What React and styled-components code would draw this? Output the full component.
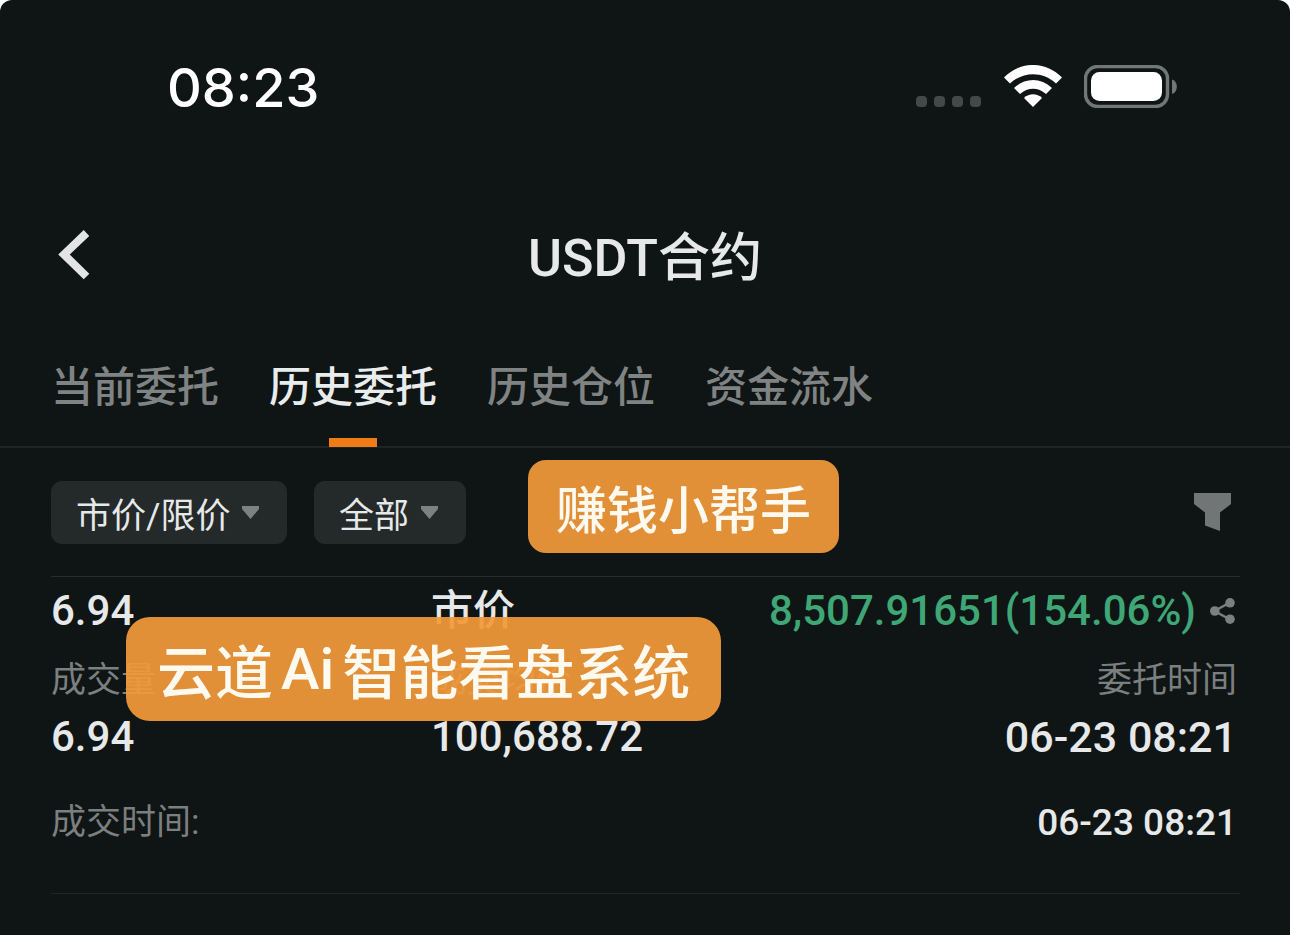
import React from "react";
import styled, { createGlobalStyle } from "styled-components";

const latin = `Roboto, "Noto Sans CJK SC", sans-serif`;

const GlobalStyle = createGlobalStyle`
  * { box-sizing: border-box; }
  body { margin: 0; background: #fff; }
  button, select { font: inherit; color: inherit; border: 0; background: none; padding: 0; margin: 0; }
  svg { display: block; flex: none; }
`;

const Screen = styled.main`
  min-height: 100vh;
  background: #0f1414;
  border-radius: 12px 12px 0 0;
  color: #e6e8e9;
  font-family: ${latin};
  overflow: hidden;
`;

const StatusBar = styled.header`
  display: flex;
  align-items: center;
  justify-content: space-between;
  height: 174px;
  padding: 0 113px 0 167px;
`;

const Clock = styled.time`
  padding-top: 2px;
  font: 500 54px/64px Inter, sans-serif;
  color: #fff;
`;

const StatusIcons = styled.div`
  display: flex;
  align-items: center;
  gap: 22px;
  padding-bottom: 2px;
`;

const TitleBar = styled.div`
  display: grid;
  grid-template-columns: 1fr auto 1fr;
  align-items: center;
  height: 162px;
  padding: 0 58px;
`;

const BackButton = styled.button`
  justify-self: start;
`;

const Title = styled.h1`
  margin: 0;
  padding-top: 8px;
  font-size: 52px;
  line-height: 64px;
  font-weight: 500;
`;

const Tabs = styled.nav`
  display: flex;
  gap: 50px;
  height: 112px;
  padding: 0 51px;
  border-bottom: 2px solid #1e2323;
`;

const Tab = styled.a`
  position: relative;
  padding-top: 22px;
  font-size: 42px;
  line-height: 60px;
  font-weight: 500;
  text-decoration: none;
  color: ${(p) => (p.$active ? "#e9ecec" : "#7f8383")};

  &::after {
    content: "";
    display: ${(p) => (p.$active ? "block" : "none")};
    position: absolute;
    left: 50%;
    bottom: -1px;
    width: 48px;
    height: 9px;
    margin-left: -24px;
    background: #f07c17;
  }
`;

const Filters = styled.section`
  position: relative;
  display: flex;
  align-items: center;
  gap: 27px;
  height: 129px;
  margin: 0 50px 0 51px;
  border-bottom: 1px solid #272c2c;
`;

const Chip = styled.label`
  display: flex;
  align-items: center;
  gap: 11px;
  height: 63px;
  padding: 0 28px 0 25px;
  border-radius: 11px;
  background: #242929;
`;

const ChipSelect = styled.select`
  appearance: none;
  height: 63px;
  padding-top: 8px;
  font-size: 35px;
  outline: none;
`;

const FilterButton = styled.button`
  margin-left: auto;
  padding-right: 9px;
`;

const Order = styled.article`
  position: relative;
  margin: 0 50px 0 51px;
  padding-bottom: 4px;
  border-bottom: 1px solid #202525;
`;

const Row = styled.div`
  display: grid;
  grid-template-columns: 380px 1fr auto;
  align-items: center;
  height: ${(p) => p.$height};
  padding-right: 3px;

  & > :last-child { justify-self: end; }
`;

const SplitRow = styled.div`
  display: flex;
  align-items: center;
  justify-content: space-between;
  height: 132px;
  padding-right: 3px;
`;

const valueSizes = { small: "37px", medium: "42px", large: "43px" };

const Value = styled.span`
  font-size: ${(p) => valueSizes[p.$size || "medium"]};
  line-height: 40px;
  font-weight: 500;
`;

const Label = styled.span`
  font-size: 35px;
  line-height: 52px;
  color: #7b7f7f;
`;

const Profit = styled.span`
  display: flex;
  align-items: center;
  gap: 14px;
  padding-right: 2px;
  font-size: 42px;
  line-height: 60px;
  font-weight: 500;
  color: #3fa676;
`;

const Badge = styled.div`
  position: absolute;
  z-index: 1;
  display: flex;
  align-items: center;
  white-space: nowrap;
  color: #fffaf0;
  background: rgba(242, 154, 59, 0.93);
  font-family: ${latin};
  font-weight: 500;
`;

const HelperBadge = styled(Badge)`
  left: 477px;
  top: 12px;
  height: 93px;
  padding: 0 28px;
  border-radius: 18px;
  font-size: 51px;
`;

const SystemBadge = styled(Badge)`
  left: 75px;
  top: 40px;
  gap: 8px;
  height: 104px;
  padding: 0 31px;
  border-radius: 24px;
  font-size: 58px;
`;

const Caret = () => (
  <svg width="17" height="13" viewBox="0 0 17 13" aria-hidden="true">
    <path d="M0 0h17v3L8.500 13 0 3z" fill="#7d8181" />
  </svg>
);

const Signal = () => (
  <svg width="66" height="42" viewBox="0 0 66 42" fill="#444848" aria-hidden="true">
    {[0, 18, 36, 54].map((x) => (
      <rect key={x} x={x} y="31" width="11" height="11" rx="4" />
    ))}
  </svg>
);

const Wifi = () => (
  <svg width="58" height="42" viewBox="0 0 58 42" fill="#fff" aria-hidden="true">
    <path d="M0 12.500C16-4.200 42-4.200 58 12.500L52 18.500C39 6.200 19 6.200 6 18.500z" />
    <path d="M10 23C21 12.300 37 12.300 48 23L42 29C34 22 24 22 16 29z" />
    <path d="M20 33C25 28 33 28 38 33L29 42z" />
  </svg>
);

const Battery = () => (
  <svg width="93" height="43" viewBox="0 0 93 43" aria-hidden="true">
    <rect x="1.500" y="1.500" width="82" height="40" rx="12" fill="none" stroke="#727676" strokeWidth="3.400" />
    <rect x="7" y="7" width="71" height="29" rx="8.500" fill="#fff" />
    <path d="M88 14.500c6.500 2 6.500 12.500 0 14.500z" fill="#727676" />
  </svg>
);

const Back = () => (
  <svg width="32" height="50" viewBox="0 0 32 50" aria-hidden="true">
    <path d="M28.500 3 6 24.500l22.500 22" fill="none" stroke="#e3e4e5" strokeWidth="8" />
  </svg>
);

const Funnel = () => (
  <svg width="37" height="38" viewBox="0 0 37 38" aria-hidden="true">
    <path d="M0 0h37v11l-11 8.500V38L11 32.500v-13L0 11z" fill="#717575" />
  </svg>
);

const Share = () => (
  <svg width="25" height="26" viewBox="0 0 25 26" fill="#7c7e80" aria-hidden="true">
    <path d="M20 4.500 4.500 13 20 21.500" fill="none" stroke="#7c7e80" strokeWidth="2.500" />
    <circle cx="4.800" cy="13" r="4.800" />
    <circle cx="20" cy="4.800" r="4.800" />
    <circle cx="20" cy="21.200" r="4.800" />
  </svg>
);

const tabs = ["当前委托", "历史委托", "历史仓位", "资金流水"];

export default function App() {
  return (
    <>
      <GlobalStyle />
      <Screen>
        <StatusBar>
          <Clock>08:23</Clock>
          <StatusIcons>
            <Signal />
            <Wifi />
            <Battery />
          </StatusIcons>
        </StatusBar>
        <TitleBar>
          <BackButton aria-label="返回"><Back /></BackButton>
          <Title>USDT合约</Title>
        </TitleBar>
        <Tabs>
          {tabs.map((name, i) => (
            <Tab key={name} href="#" $active={i === 1} aria-current={i === 1 ? "page" : undefined}>
              {name}
            </Tab>
          ))}
        </Tabs>
        <Filters>
          <Chip>
            <ChipSelect aria-label="委托类型"><option>市价/限价</option></ChipSelect>
            <Caret />
          </Chip>
          <Chip>
            <ChipSelect aria-label="委托状态"><option>全部</option></ChipSelect>
            <Caret />
          </Chip>
          <FilterButton aria-label="筛选"><Funnel /></FilterButton>
          <HelperBadge>赚钱小帮手</HelperBadge>
        </Filters>
        <Order>
          <Row $height="68px">
            <Value>6.94</Value>
            <Value>市价</Value>
            <Profit>
              8,507.91651(154.06%)
              <button aria-label="分享"><Share /></button>
            </Profit>
          </Row>
          <Row $height="72px">
            <Label>成交量</Label>
            <Label>成交均价</Label>
            <Label>委托时间</Label>
          </Row>
          <Row $height="40px">
            <Value>6.94</Value>
            <Value>100,688.72</Value>
            <Value $size="large">06-23 08:21</Value>
          </Row>
          <SplitRow>
            <Label>成交时间:</Label>
            <Value $size="small">06-23 08:21</Value>
          </SplitRow>
          <SystemBadge>
            <span>云道</span>
            <span>Ai</span>
            <span>智能看盘系统</span>
          </SystemBadge>
        </Order>
      </Screen>
    </>
  );
}
